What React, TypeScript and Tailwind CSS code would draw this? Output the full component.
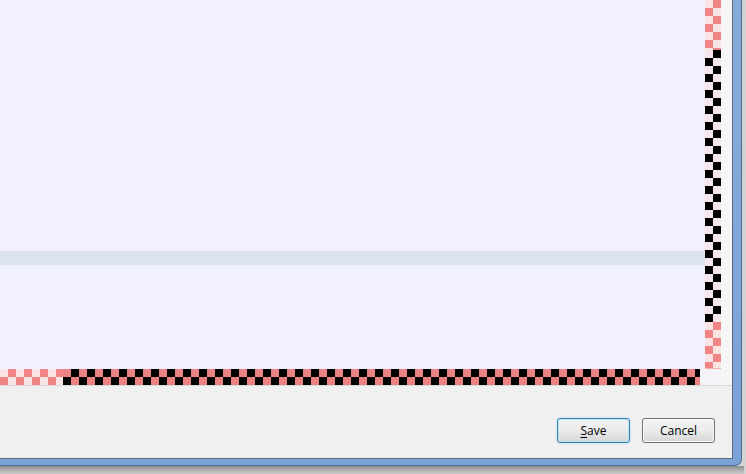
import React from "react";

function Button({ label, hotkey, focused }: { label: string; hotkey?: boolean; focused?: boolean }) {
  return (
    <button
      className={
        "w-[73px] h-[25px] rounded-[3px] border text-[12px] text-black bg-gradient-to-b from-[#f3f3f3] via-[#ebebeb] to-[#d6d6d6] " +
        (focused
          ? "border-[#3c7fb1] shadow-[inset_0_0_0_1px_#b6e4f7,0_0_2px_#9fd3ef]"
          : "border-[#707070] shadow-[inset_0_0_0_1px_#fbfbfb]")
      }
      style={{ fontFamily: '"Open Sans", "Noto Sans", sans-serif' }}
    >
      {hotkey ? (
        <>
          <span className="underline underline-offset-2">{label[0]}</span>
          {label.slice(1)}
        </>
      ) : (
        label
      )}
    </button>
  );
}

export default function App() {
  return (
    <div className="w-[746px] h-[474px] bg-[#d3d3d3] flex flex-col overflow-hidden">
      {/* window frame */}
      <div className="flex flex-col w-[742px] h-[466px] bg-gradient-to-b from-[#86acdc] to-[#7aa2d6] border-r border-b border-[#4e6a8f] rounded-br-[7px] pr-[8px] pb-[6px]">
        <div className="flex-1 flex flex-col bg-[#f0f0f0] border-r border-b border-[#5b6a7c]">
          {/* canvas region */}
          <div className="flex h-[386px] border-b border-[#d8d8d8] bg-[#f6f6f6]">
            <div className="flex flex-col w-[721px]">
              <div className="flex h-[369px]">
                <div className="w-[705px] flex flex-col bg-[#f1f1fe]">
                  <div className="h-[251px]" />
                  <div className="h-[14px] bg-[#dde3ee]" />
                </div>
                <div className="w-[16px] flex flex-col">
                  <div className="h-[50px] bg-[repeating-conic-gradient(#ef8585_0_25%,#f9e4e4_0_50%)] bg-[length:16px_16px]" />
                  <div className="h-[272px] bg-[repeating-conic-gradient(#000000_0_25%,#f7e6ee_0_50%)] bg-[length:16px_16px]" />
                  <div className="flex-1 bg-[repeating-conic-gradient(#ef8585_0_25%,#f9e4e4_0_50%)] bg-[length:16px_16px] border-b border-[#f3b0b0]" />
                </div>
              </div>
              <div className="flex h-[16px]">
                <div className="w-[63px] bg-[repeating-conic-gradient(#ef8585_0_25%,#f9e4e4_0_50%)] bg-[length:16px_16px]" />
                <div className="w-[637px] bg-[repeating-conic-gradient(#000000_0_25%,#ee8282_0_50%)] bg-[length:16px_16px]" />
                <div className="flex-1 bg-[#f4f4f8]" />
              </div>
            </div>
          </div>
          {/* button bar */}
          <div className="flex-1 flex justify-end items-start pt-[32px] pr-[17px] gap-[12px]">
            <Button label="Save" hotkey focused />
            <Button label="Cancel" />
          </div>
        </div>
      </div>
      <div className="flex-1 w-[744px] bg-gradient-to-b from-[#8e8e8e] to-[#cdcdcd]" />
    </div>
  );
}
